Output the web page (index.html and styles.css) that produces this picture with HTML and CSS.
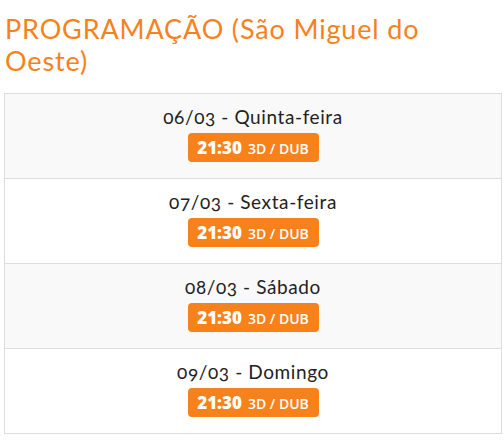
FILE: index.html
```html
<!DOCTYPE html>
<html lang="pt">
<head>
<meta charset="utf-8">
<link rel="stylesheet" href="styles.css">
</head>
<body>
<div class="page">
  <h2 class="title">PROGRAMAÇÃO (São Miguel do Oeste)</h2>
  <div class="schedule">
    <div class="day">
      <div class="date">06/03 - Quinta-feira</div>
      <span class="session"><b class="time">21:30</b><span class="fmt">3D / DUB</span></span>
    </div>
    <div class="day">
      <div class="date">07/03 - Sexta-feira</div>
      <span class="session"><b class="time">21:30</b><span class="fmt">3D / DUB</span></span>
    </div>
    <div class="day">
      <div class="date">08/03 - Sábado</div>
      <span class="session"><b class="time">21:30</b><span class="fmt">3D / DUB</span></span>
    </div>
    <div class="day">
      <div class="date">09/03 - Domingo</div>
      <span class="session"><b class="time">21:30</b><span class="fmt">3D / DUB</span></span>
    </div>
  </div>
</div>
</body>
</html>
```
FILE: styles.css
```css
html, body {
  margin: 0;
  padding: 0;
  background: #ffffff;
}
.page {
  padding: 0 2px 0 4px;
  font-family: "Lato", "Open Sans", sans-serif;
}
.title {
  margin: 13px 0 16px 1px;
  font-size: 27px;
  line-height: 32px;
  font-weight: 400;
  letter-spacing: 0.85px;
  color: #f7821b;
}
.schedule {
  border: 1px solid #dddddd;
}
.day {
  height: 85px;
  border-bottom: 1px solid #dddddd;
  display: flex;
  flex-direction: column;
  align-items: center;
  padding-top: 11px;
  box-sizing: border-box;
}
.day:last-child {
  border-bottom: none;
  height: 84px;
}
.day:nth-child(odd) {
  background: #f9f9f9;
}
.date {
  font-size: 19px;
  line-height: 24px;
  letter-spacing: 0.6px;
  color: #222222;
  font-variant-numeric: oldstyle-nums;
}
.session {
  margin-top: 4px;
  display: flex;
  align-items: baseline;
  gap: 6px;
  height: 29px;
  box-sizing: border-box;
  padding: 5px 0 0 0;
  width: 131px;
  justify-content: center;
  background: #f7821b;
  border-radius: 4px;
  color: #ffffff;
  font-family: "Open Sans", sans-serif;
}
.time {
  font-size: 17px;
  font-weight: 800;
  line-height: 20px;
}
.fmt {
  font-size: 14px;
  font-weight: 600;
  line-height: 20px;
}
```
